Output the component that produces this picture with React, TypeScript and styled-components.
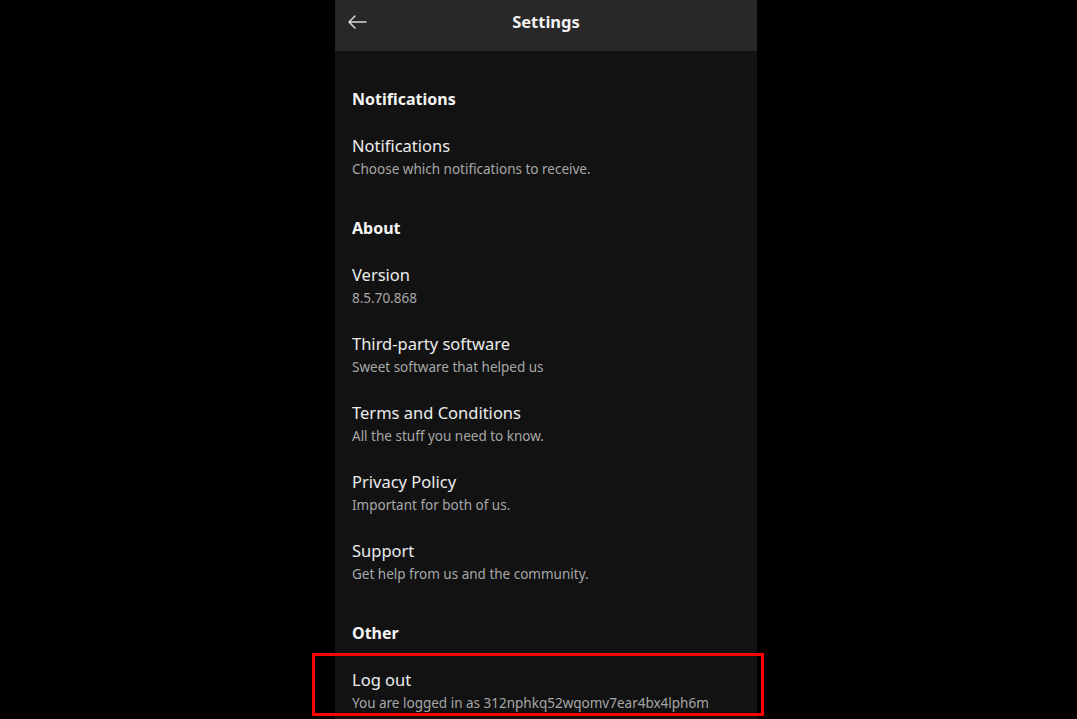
import React from "react";
import styled, { createGlobalStyle } from "styled-components";

const GlobalStyle = createGlobalStyle`
  html, body {
    margin: 0;
    padding: 0;
    background: #000;
    height: 100%;
    overflow: hidden;
  }
  body {
    font-family: "Noto Sans", "Liberation Sans", sans-serif;
    -webkit-font-smoothing: antialiased;
  }
`;

const Page = styled.div`
  display: flex;
  justify-content: center;
  height: 719px;
  padding-left: 15px;
`;

const Panel = styled.div`
  width: 422px;
  display: flex;
  flex-direction: column;
  background: #121212;
`;

const Header = styled.header`
  height: 51px;
  flex-shrink: 0;
  display: grid;
  grid-template-columns: 44px 1fr 44px;
  align-items: center;
  background: #282828;
  padding-bottom: 9px;
  box-sizing: border-box;
`;

const BackButton = styled.button`
  display: flex;
  align-items: center;
  justify-content: center;
  background: none;
  border: none;
  padding: 0;
  margin-top: 1px;
  color: #d9d9d9;
  cursor: pointer;
`;

const Title = styled.h1`
  margin: 0;
  text-align: center;
  font-size: 16.5px;
  font-weight: 700;
  color: #f2f2f2;
`;

const Body = styled.div`
  flex: 1;
  padding: 11px 17px 0;
`;

const Section = styled.section`
  padding-top: 25px;
`;

const SectionTitle = styled.h2`
  margin: 0 0 11px;
  font-size: 16px;
  line-height: 24px;
  font-weight: 700;
  color: #f5f5f5;
`;

const Item = styled.div`
  position: relative;
  padding: 12px 0;
`;

const ItemTitle = styled.div`
  font-size: 16.5px;
  line-height: 24px;
  color: #ececec;
`;

const ItemSub = styled.div`
  margin-top: 1px;
  font-size: 13.5px;
  line-height: 20px;
  color: #a7a7a7;
`;

const Annotation = styled.div`
  position: absolute;
  left: -40px;
  top: -3px;
  width: 446px;
  height: 57px;
  border: 3px solid #ff0000;
  pointer-events: none;
`;

type Entry = { title: string; sub: string; highlight?: boolean };

const sections: { name: string; items: Entry[] }[] = [
  {
    name: "Notifications",
    items: [
      { title: "Notifications", sub: "Choose which notifications to receive." },
    ],
  },
  {
    name: "About",
    items: [
      { title: "Version", sub: "8.5.70.868" },
      { title: "Third-party software", sub: "Sweet software that helped us" },
      { title: "Terms and Conditions", sub: "All the stuff you need to know." },
      { title: "Privacy Policy", sub: "Important for both of us." },
      { title: "Support", sub: "Get help from us and the community." },
    ],
  },
  {
    name: "Other",
    items: [
      {
        title: "Log out",
        sub: "You are logged in as 312nphkq52wqomv7ear4bx4lph6m",
        highlight: true,
      },
    ],
  },
];

const ArrowLeft = () => (
  <svg width="20" height="14" viewBox="0 0 20 14" fill="none">
    <path
      d="M19 7H2M8 1L2 7l6 6"
      stroke="currentColor"
      strokeWidth="1.5"
      strokeLinecap="round"
      strokeLinejoin="round"
    />
  </svg>
);

export default function App() {
  return (
    <>
      <GlobalStyle />
      <Page>
        <Panel>
          <Header>
            <BackButton aria-label="Back">
              <ArrowLeft />
            </BackButton>
            <Title>Settings</Title>
            <span />
          </Header>
          <Body>
            {sections.map((s) => (
              <Section key={s.name}>
                <SectionTitle>{s.name}</SectionTitle>
                {s.items.map((it) => (
                  <Item key={it.title}>
                    <ItemTitle>{it.title}</ItemTitle>
                    <ItemSub>{it.sub}</ItemSub>
                    {it.highlight && <Annotation />}
                  </Item>
                ))}
              </Section>
            ))}
          </Body>
        </Panel>
      </Page>
    </>
  );
}
